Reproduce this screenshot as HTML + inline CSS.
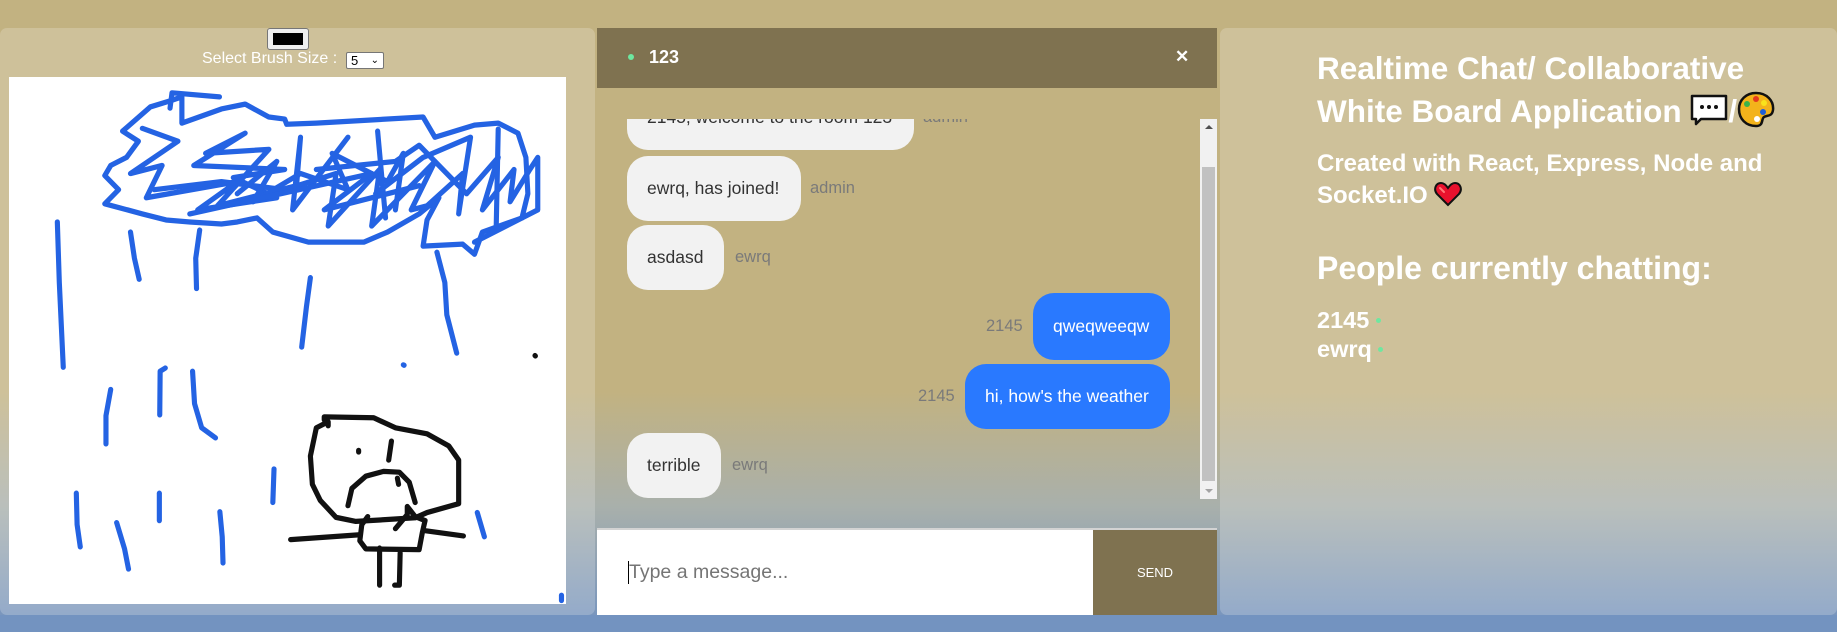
<!DOCTYPE html>
<html><head><meta charset="utf-8"><style>
*{box-sizing:border-box;margin:0;padding:0}
body{width:1837px;height:632px;overflow:hidden;position:relative;font-family:"Liberation Sans",Arial,sans-serif;background:linear-gradient(to bottom,#c2b281 0%,#c2b281 62%,#a9b0ab 80%,#7292c0 100%)}
.topband{position:absolute;left:0;top:0;width:1837px;height:28px;background:#c2b281}
.botband{position:absolute;left:0;top:615px;width:1837px;height:17px;background:#7393c0}
.panel{position:absolute;top:28px;height:587px;background:rgba(255,255,255,0.2);border-radius:7px}
.abs{position:absolute}
.bub{position:absolute;background:#f2f2f2;border-radius:21px;color:#333;font-size:17.5px;line-height:65px;padding:0 20px;height:65px;white-space:nowrap}
.blue{background:#2979ff;color:#fff}
.who{position:absolute;color:#7a7a7a;font-size:16.5px;line-height:65px}
.rt{position:absolute;left:1317px;color:#fff;font-weight:bold;white-space:nowrap}
</style></head><body>
<div class="topband"></div>
<div class="panel" style="left:0;width:595px"></div>
<div class="panel" style="left:1220px;width:617px"></div>
<div class="botband"></div>

<!-- left whiteboard -->
<div class="abs" style="left:267px;top:28px;width:42px;height:22px;background:#efefef;border:1px solid #767676;border-radius:3px"><div style="margin:4px 5px;height:12px;background:#000"></div></div>
<div class="abs" style="left:202px;top:50px;color:#fff;font-size:16px;line-height:18px">Select Brush Size :</div>
<div class="abs" style="left:346px;top:52px;width:38px;height:17px;background:#fff;border:1px solid #767676;border-radius:2px;font-size:13px;line-height:15px;padding-left:4px;color:#000">5<span style="position:absolute;right:4px;top:0;font-size:10px">&#8964;</span></div>
<div class="abs" style="left:9px;top:77px;width:557px;height:527px;background:#fff"></div>
<svg class="abs" style="left:0;top:0" width="620" height="632" viewBox="0 0 1568 1566" preserveAspectRatio="none" fill="none" stroke-linecap="round" stroke-linejoin="round">
<g stroke="#2463e3" stroke-width="13">
<path d="M310,325 L380,265 L430,250 L460,240 L460,305 L560,270 L620,258 L680,290 L720,295 L725,308 L800,305 L1070,290 L1100,340 L1200,310 L1260,305 L1310,330 L1330,390 L1335,480 L1320,540 L1220,575 L1200,630 L1170,605 L1070,610 L1080,545 L1110,490 L1060,530 L980,575 L920,600 L780,600 L690,575 L650,540 L600,550 L560,555 L480,550 L420,545 L360,530 L265,505 L300,470 L265,435 L280,410 L320,390 L350,350 L310,325"/>
<path d="M430,268 L435,230 L555,240"/>
<path d="M360,318 L450,350 L330,430 L410,410 L370,490 L600,450 L500,520 L700,490 L590,440 L720,420 L490,410 L620,330 L520,380 L680,370 L550,510 L750,460 L760,340 L740,520 L880,340"/>
<path d="M390,470 L560,450 L720,470 L850,430 L830,560 L960,420 L940,560 L1100,400 L1040,520 L1080,510 L1170,430 L1160,530 L1190,340 L1070,390 L950,480"/>
<path d="M800,420 L1000,400 L1060,360 L1180,480 L1260,390 L1220,520 L1300,420 L1290,500 L1340,420 L1360,390 L1360,520 L1200,600"/>
<path d="M600,480 L700,400 L640,500 L760,430 L880,470 L840,380 L980,450 L1020,380 L1000,520"/>
<path d="M955,325 L975,540"/>
<path d="M1260,320 L1255,560"/>
<path d="M480,530 L940,430 L820,520 L1060,460"/>
<path d="M145,550 L150,700 L160,910"/>
<path d="M330,575 L340,640 L352,692"/>
<path d="M505,570 L495,640 L497,715"/>
<path d="M785,688 L775,760 L763,860"/>
<path d="M1105,625 L1125,700 L1130,780 L1155,875"/>
<path d="M280,965 L268,1030 L268,1100"/>
<path d="M418,912 L405,920 L404,1028"/>
<path d="M487,920 L492,1000 L510,1060 L545,1085"/>
<path d="M693,1162 L690,1245"/>
<path d="M193,1222 L195,1300 L203,1355"/>
<path d="M403,1222 L403,1290"/>
<path d="M295,1295 L315,1360 L325,1410"/>
<path d="M556,1268 L562,1330 L564,1395"/>
<path d="M1207,1270 L1225,1330"/>
<path d="M1020,904 L1022,905"/>
<path d="M1420,1475 L1420,1488"/>
</g>
<g stroke="#111" stroke-width="13">
<path d="M1353,881 L1354,882"/>
<path d="M820,1040 L820,1033 L945,1035 L1000,1060 L1080,1075 L1135,1105 L1160,1140 L1160,1248 L1080,1270 L1050,1283 L900,1292 L850,1282 L810,1240 L790,1200 L785,1130 L800,1060 L830,1045 L830,1055"/>
<path d="M907,1116 L907,1120"/>
<path d="M990,1093 L983,1140"/>
<path d="M880,1253 L890,1210 L925,1180 L970,1168 L1010,1170 L1035,1195 L1050,1245"/>
<path d="M1005,1185 L1008,1200"/>
<path d="M930,1280 L915,1300 L910,1340 L925,1360 L1060,1362 L1068,1320 L1075,1290 L1050,1280 L1030,1255 L1030,1275 L1000,1310"/>
<path d="M735,1337 L910,1325"/>
<path d="M1075,1315 L1172,1328"/>
<path d="M960,1358 L960,1450"/>
<path d="M1012,1370 L1010,1450 L998,1450"/>
</g>
</svg>

<!-- chat -->
<div class="abs" style="left:597px;top:28px;width:620px;height:60px;background:#7f7250"></div>
<div class="abs" style="left:628px;top:54px;width:6px;height:6px;border-radius:50%;background:#6ee7a0"></div>
<div class="abs" style="left:649px;top:47px;color:#fff;font-weight:bold;font-size:18px;line-height:20px">123</div>
<div class="abs" style="left:1175px;top:47px;color:#fff;font-weight:bold;font-size:17px;line-height:20px">✕</div>

<div class="abs" style="left:597px;top:119px;width:620px;height:380px;overflow:hidden">
  <div class="bub" style="left:30px;top:-34px;width:287px">2145, welcome to the room 123</div>
  <div class="who" style="left:326px;top:-34px">admin</div>
  <div class="bub" style="left:30px;top:37px;width:174px">ewrq, has joined!</div>
  <div class="who" style="left:213px;top:37px">admin</div>
  <div class="bub" style="left:30px;top:106px;width:97px">asdasd</div>
  <div class="who" style="left:138px;top:106px">ewrq</div>
  <div class="who" style="left:389px;top:175px">2145</div>
  <div class="bub blue" style="left:436px;top:174px;width:137px;height:67px;line-height:67px">qweqweeqw</div>
  <div class="who" style="left:321px;top:245px">2145</div>
  <div class="bub blue" style="left:368px;top:245px;width:205px">hi, how's the weather</div>
  <div class="bub" style="left:30px;top:314px;width:94px">terrible</div>
  <div class="who" style="left:135px;top:314px">ewrq</div>
  <div class="abs" style="left:603px;top:0;width:17px;height:380px;background:#f1f1f1">
    <div class="abs" style="left:5px;top:6px;width:0;height:0;border-left:4px solid transparent;border-right:4px solid transparent;border-bottom:4px solid #505050"></div>
    <div class="abs" style="left:2px;top:48px;width:13px;height:314px;background:#c1c1c1"></div>
    <div class="abs" style="left:5px;top:370px;width:0;height:0;border-left:4px solid transparent;border-right:4px solid transparent;border-top:4px solid #a3a3a3"></div>
  </div>
</div>

<div class="abs" style="left:597px;top:528px;width:620px;height:2px;background:#d3d3d3"></div>
<div class="abs" style="left:597px;top:530px;width:496px;height:85px;background:#fff"></div>
<div class="abs" style="left:628px;top:561px;width:1px;height:23px;background:#000"></div>
<div class="abs" style="left:629px;top:560px;color:#757575;font-size:19.5px;line-height:24px">Type a message...</div>
<div class="abs" style="left:1093px;top:530px;width:124px;height:85px;background:#7f7250;color:#fff;font-size:13px;line-height:85px;text-align:center">SEND</div>

<!-- right -->
<div class="rt" style="top:48px;font-size:31.5px;line-height:40px">Realtime Chat/ Collaborative</div>
<div class="rt" style="top:91px;font-size:31.5px;line-height:40px">White Board Application
<svg width="38" height="34" viewBox="0 0 38 34" style="vertical-align:-5px"><path d="M2,3 H36 V26 H11 L6,31 V26 H2 Z" fill="#fff" stroke="#111" stroke-width="2.5" stroke-linejoin="round"/><circle cx="12" cy="14" r="2" fill="#111"/><circle cx="19" cy="14" r="2" fill="#111"/><circle cx="26" cy="14" r="2" fill="#111"/></svg>/<svg width="38" height="38" viewBox="0 0 38 38" style="vertical-align:-7px"><path d="M19,2 C30,2 37,10 36,19 C35,26 30,24 27,26 C24,28 27,35 19,35 C9,35 2,28 2,18 C2,9 9,2 19,2Z" fill="#f3b31b" stroke="#111" stroke-width="2.5"/><circle cx="19" cy="8" r="3" fill="#e53a1e"/><circle cx="10" cy="13" r="3" fill="#3bb34a"/><circle cx="27" cy="12" r="3" fill="#f9e21b"/><circle cx="26" cy="21" r="3" fill="#1d5ed8"/><circle cx="20" cy="28" r="3" fill="#fff"/></svg></div>
<div class="rt" style="top:149px;font-size:24px;line-height:30px">Created with React, Express, Node and</div>
<div class="rt" style="top:181px;font-size:24px;line-height:30px">Socket.IO <svg width="28" height="26" viewBox="0 0 28 26" style="vertical-align:-4px"><path d="M14,24 L3,13 C-1,8 2,2 7,2 C10,2 12,4 14,7 C16,4 18,2 21,2 C26,2 29,8 25,13 Z" fill="#e8112d" stroke="#111" stroke-width="2"/><path d="M6,7 L10,11" stroke="#f77" stroke-width="2" stroke-linecap="round"/></svg></div>
<div class="rt" style="top:249px;font-size:32px;line-height:38px">People currently chatting:</div>
<div class="rt" style="top:307px;font-size:23.5px;line-height:26px">2145 <span style="display:inline-block;width:5px;height:5px;border-radius:50%;background:#6ee7a0;vertical-align:5px"></span></div>
<div class="rt" style="top:336px;font-size:23.5px;line-height:26px">ewrq <span style="display:inline-block;width:5px;height:5px;border-radius:50%;background:#6ee7a0;vertical-align:5px"></span></div>
</body></html>
